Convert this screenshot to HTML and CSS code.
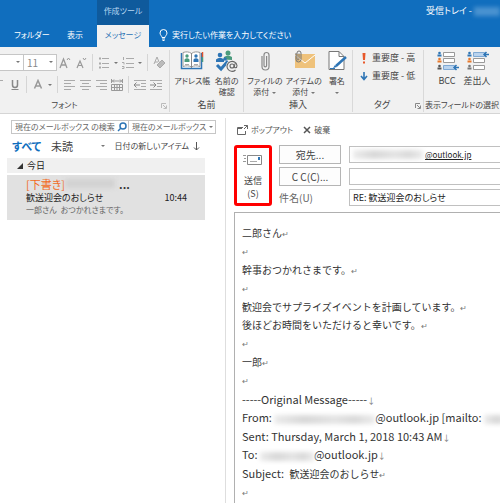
FILE: index.html
```html
<!DOCTYPE html>
<html lang="ja">
<head>
<meta charset="utf-8">
<title>受信トレイ</title>
<link rel="stylesheet" href="styles.css">
</head>
<body>
<header class="titlebar">
  <nav class="tabs">
    <a class="tab tab-folder" href="#">フォルダー</a>
    <a class="tab tab-view" href="#">表示</a>
    <div class="tool-tab">
      <span class="tool-title">作成ツール</span>
      <a class="tab tab-active" href="#">メッセージ</a>
    </div>
    <button class="tell-me" type="button">
      <svg width="9" height="12" viewBox="0 0 9 12" fill="none" stroke="#fff"><path d="M3 8.500C3 7 1 6 1 4a3.500 3.500 0 0 1 7 0c0 2-2 3-2 4.500zM3 10h3M3.500 11.500h2"/></svg>
      実行したい作業を入力してください
    </button>
  </nav>
  <div class="window-title">受信トレイ - <span class="mask mask-title"></span></div>
</header>

<section class="ribbon">
  <div class="group group-font">
    <div class="font-rows">
      <div class="row">
        <label class="pick pick-name"><select aria-label="フォント名"><option></option></select></label>
        <label class="pick pick-size"><select aria-label="サイズ"><option>11</option></select></label>
        <button class="tool" aria-label="拡大"><svg width="14" height="14" viewBox="0 0 14 14" fill="none" stroke="#999"><path d="M2 12 5.500 3 9 12M3 9h5" stroke-width="1.300"/><path d="m9 4 1.500-2L12 4"/></svg></button>
        <button class="tool" aria-label="縮小"><svg width="14" height="14" viewBox="0 0 14 14" fill="none" stroke="#999"><path d="m3 12 3-7 3 7M4 9.500h4" stroke-width="1.200"/><path d="m9 2 1.500 2L12 2"/></svg></button>
        <i class="sep"></i>
        <button class="tool" aria-label="箇条書き"><svg width="12" height="12" viewBox="0 0 12 12" stroke="#aaa"><path d="M1 1.500h2M1 6.500h2M1 10.500h2" stroke-width="2"/><path d="M4 1.500h7M4 6.500h7M4 10.500h7"/></svg></button>
        <button class="drop" aria-label="箇条書きの種類"></button>
        <button class="tool" aria-label="段落番号"><svg width="12" height="12" viewBox="0 0 12 12" fill="none" stroke="#aaa"><path d="M1.500 0v3M0 5.500h2v2M0 9.500h2v2H0M4 1.500h8M4 6.500h8M4 10.500h8"/></svg></button>
        <button class="drop" aria-label="段落番号の種類"></button>
        <i class="sep"></i>
        <button class="tool" aria-label="書式のクリア"><svg width="13" height="13" viewBox="0 0 13 13" fill="none" stroke="#aaa"><path d="m1 8 3-7 2 5M2 6h3"/><path d="m4 9 5-5 3 3-5 5z" fill="#bbb"/></svg></button>
      </div>
      <div class="row">
        <button class="tool tool-cut" aria-label="斜体"><svg width="3" height="10" viewBox="0 0 3 10"><path d="M0 .5h3" stroke="#aaa"/></svg></button>
        <button class="tool" aria-label="下線"><svg width="10" height="12" viewBox="0 0 10 12" fill="none" stroke="#888"><path d="M2.500 1v5a2.500 2.500 0 0 0 5 0V1" stroke-width="1.500"/><path d="M1.500 10.500h7"/></svg></button>
        <i class="sep"></i>
        <button class="tool" aria-label="文字の色"><svg width="10" height="11" viewBox="0 0 10 11" fill="none" stroke="#999" stroke-width="1.500"><path d="m1.500 9.500 3.500-8 3.500 8M2.500 7h5"/></svg></button>
        <button class="drop" aria-label="色の種類"></button>
        <i class="sep"></i>
        <button class="tool" aria-label="左揃え"><svg width="11" height="11" viewBox="0 0 11 11" stroke="#aaa"><path d="M0 1.500h11M0 4.500h7M0 7.500h11M0 10.500h7"/></svg></button>
        <button class="tool" aria-label="中央揃え"><svg width="11" height="11" viewBox="0 0 11 11" stroke="#aaa"><path d="M0 1.500h11M2 4.500h7M0 7.500h11M2 10.500h7"/></svg></button>
        <button class="tool" aria-label="右揃え"><svg width="11" height="11" viewBox="0 0 11 11" stroke="#aaa"><path d="M0 1.500h11M4 4.500h7M0 7.500h11M4 10.500h7"/></svg></button>
        <button class="tool" aria-label="均等割り付け"><svg width="12" height="12" viewBox="0 0 12 12" fill="none" stroke="#999"><path d="M.5 0v4M11.500 0v4M1 2h10M3 .5 1.500 2 3 3.500M9 .5 10.500 2 9 3.500"/><path d="M.5 5.500h11v6H.5zM.5 8.500h11M3.500 5v7M6 5v7M8.500 5v7"/></svg></button>
        <i class="sep"></i>
        <button class="tool" aria-label="インデント解除"><svg width="12" height="12" viewBox="0 0 12 12" fill="none" stroke="#aaa"><path d="M0 1.500h12M7 4.500h5M7 7.500h5M0 10.500h12"/><path d="M0 6h6M2.500 3.500 0 6l2.500 2.500" stroke="#888"/></svg></button>
        <button class="tool" aria-label="インデント"><svg width="12" height="12" viewBox="0 0 12 12" fill="none" stroke="#aaa"><path d="M0 1.500h12M7 4.500h5M7 7.500h5M0 10.500h12"/><path d="M0 6h6M3.500 3.500 6 6 3.500 8.500" stroke="#888"/></svg></button>
      </div>
    </div>
    <footer class="group-name group-name-font small">フォント<svg class="launch" width="6" height="6" viewBox="0 0 6 6" fill="none" stroke="#bbb"><path d="M.5 5V.5H5M2 2l3 3M5.500 2.500v3h-3"/></svg></footer>
  </div>

  <div class="group group-names">
    <div class="bigs">
      <button class="big"><svg width="24" height="22" viewBox="0 0 24 22" fill="none"><path d="M1.500 3v15.500h20V3" fill="#fff" stroke="#2e75b5" stroke-width="1.500"/><path d="M3 2.500c3-1 6-1 8.500 1C14 1.500 17 1.500 20 2.500v14c-3-1-6-1-8.500.5-2.500-1.500-5.500-1.500-8.500-.5z" fill="#fff" stroke="#999"/><path d="M11.500 3v15" stroke="#888"/><circle cx="7" cy="6" r="1.700" fill="#4b9b7d"/><path d="M4.500 12V9.500q2.500-2.500 5 0V12z" fill="#4b9b7d"/><circle cx="16" cy="6" r="1.700" fill="#2e75b5"/><path d="M13.500 12V9.500q2.500-2.500 5 0V12z" fill="#2e75b5"/><path d="M5 14.500h4M14 14.500h4" stroke="#aaa"/><path d="M22.500 2v5" stroke="#e0532d" stroke-width="1.500"/><path d="M22.500 7v5" stroke="#4b9b7d" stroke-width="1.500"/></svg>アドレス帳</button>
      <button class="big"><svg width="24" height="22" viewBox="0 0 24 22" fill="none"><circle cx="5" cy="5" r="2.300" fill="#2e75b5"/><path d="M1 12V9.500q4-3.500 8 0V12z" fill="#2e75b5"/><circle cx="13" cy="3" r="2.500" fill="#4b9b7d"/><path d="M9 9.500V7q4-3 8 0v3z" fill="#4b9b7d"/><circle cx="10" cy="9" r="1.800" fill="#2e75b5"/><path d="m2 15 4 4 7-8" stroke="#2e75b5" stroke-width="3"/><circle cx="17" cy="16" r="6" fill="#f1f1f1"/><path d="M20.500 20a5 5 0 1 1 1.500-4.500c0 3-3 3-2.500.5l.5-2.500" stroke="#666" stroke-width="1.100"/><circle cx="17" cy="16" r="2" stroke="#666" stroke-width="1.100"/></svg>名前の<br>確認</button>
    </div>
    <footer class="group-name">名前</footer>
  </div>

  <div class="group group-insert">
    <div class="bigs">
      <button class="big"><svg width="24" height="22" viewBox="0 0 24 22" fill="none" stroke="#888" stroke-width="1.200"><path d="M9 6v10.500a3.500 3.500 0 0 0 7 0V5a2.500 2.500 0 0 0-5 0v10.500a1.300 1.300 0 0 0 2.600 0V6"/></svg>ファイルの<br><span class="more">添付</span></button>
      <button class="big"><svg width="24" height="22" viewBox="0 0 24 22" fill="none"><path d="M3 4h20v14H3z" fill="#efc27b"/><path d="m3 5 10 8 10-8" stroke="#fff"/><path d="M4 3v6.500a2.500 2.500 0 0 0 5 0V3a2 2 0 0 0-4 0v6a1 1 0 0 0 2 0V3.500" stroke="#777"/></svg>アイテムの<br><span class="more">添付</span></button>
      <button class="big"><svg width="24" height="22" viewBox="0 0 24 22" fill="none"><path d="M4 1.500h10l5 5v13H4z" fill="#fff" stroke="#777"/><path d="M14 1.500v5h5" stroke="#777"/><path d="m11 16 10-9" stroke="#2e75b5" stroke-width="2.500"/><path d="m8 18 2-3 2 2z" fill="#2e75b5"/><path d="M5 18.500h5" stroke="#2e75b5"/></svg>署名<br><span class="more more-alone"></span></button>
    </div>
    <footer class="group-name">挿入</footer>
  </div>

  <div class="group group-tags">
    <div class="flags">
      <button class="flag"><svg width="10" height="12" viewBox="0 0 10 12"><path d="M3.500 1h3L6 8H4zM4 9.500h2v2H4z" fill="#e8592b"/></svg>重要度 - 高</button>
      <button class="flag"><svg width="10" height="12" viewBox="0 0 10 12" fill="none" stroke="#2e75b5" stroke-width="1.600"><path d="M5 2v7M2 6l3 3.500L8 6"/></svg>重要度 - 低</button>
    </div>
    <footer class="group-name group-name-tags">タグ<svg class="launch" width="6" height="6" viewBox="0 0 6 6" fill="none" stroke="#888"><path d="M.5 5V.5H5M2 2l3 3M5.500 2.500v3h-3"/></svg></footer>
  </div>

  <div class="group group-fields">
    <div class="bigs bigs-fields">
      <button class="big big-field"><svg width="24" height="22" viewBox="0 0 24 22" fill="none"><path d="M8.500 2.500h11v4h-11zM8.500 8.500h11v4h-11z" fill="#fff" stroke="#999"/><path d="M8.500 15.500h11v4h-11z" fill="#b9d3ee" stroke="#7fa9d3"/><path d="M24 17.500h-5M21.500 15l-2.500 2.500 2.500 2.500" stroke="#2e75b5" stroke-width="1.500"/><g fill="#2e75b5"><circle cx="4.500" cy="3" r="1.300"/><path d="M2.500 4.500h4v2h-4z"/></g><g fill="#e8792b"><circle cx="4.500" cy="9" r="1.300"/><path d="M2.500 10.500h4v2h-4z"/></g><g fill="#555"><circle cx="4.500" cy="16" r="1.300"/><path d="M2.500 17.500h4v2h-4z"/></g></svg>BCC</button>
      <button class="big big-field"><svg width="24" height="22" viewBox="0 0 24 22" fill="none"><path d="M8.500 8.500h11v4h-11zM8.500 15.500h11v4h-11z" fill="#fff" stroke="#999"/><path d="M8.500 2.500h11v4h-11z" fill="#b9d3ee" stroke="#7fa9d3"/><path d="M24 4.500h-5M21.500 2 19 4.500 21.500 7" stroke="#2e75b5" stroke-width="1.500"/><g fill="#2e75b5"><circle cx="4.500" cy="3" r="1.300"/><path d="M2.500 4.500h4v2h-4z"/></g><g fill="#e8792b"><circle cx="4.500" cy="9" r="1.300"/><path d="M2.500 10.500h4v2h-4z"/></g><g fill="#777"><circle cx="4.500" cy="16" r="1.300"/><path d="M2.500 17.500h4v2h-4z"/></g></svg>差出人</button>
    </div>
    <footer class="group-name small">表示フィールドの選択</footer>
  </div>
</section>

<main class="panes">
  <aside class="list">
    <div class="search">
      <input class="search-box" type="text" aria-label="検索" placeholder="現在のメールボックス の検索">
      <button class="search-go" aria-label="検索する"><svg width="10" height="10" viewBox="0 0 10 10" fill="none" stroke="#2e75b5" stroke-width="1.500"><circle cx="6" cy="4" r="3"/><path d="M4 6 1 9"/></svg></button>
      <label class="pick pick-scope"><select aria-label="検索範囲"><option>現在のメールボックス</option></select></label>
    </div>
    <div class="filters">
      <a class="filter filter-on" href="#">すべて</a>
      <a class="filter" href="#">未読</a>
      <button class="drop filter-more" aria-label="並べ替えの種類"></button>
      <button class="sort">日付の新しいアイテム</button>
      <svg width="7" height="9" viewBox="0 0 7 9" fill="none" stroke="#555"><path d="M3.500 0v8M1 5.500 3.500 8 6 5.500"/></svg>
    </div>
    <h2 class="day"><svg width="6" height="6" viewBox="0 0 6 6"><path d="M6 0v6H0z" fill="#333"/></svg>今日</h2>
    <article class="mail">
      <div class="mail-from">[下書き]<span class="mask mask-from"></span><b>...</b></div>
      <div class="mail-subject"><span>歓送迎会のおしらせ</span><time>10:44</time></div>
      <div class="mail-text">一郎さん&ensp;おつかれさまです。</div>
    </article>
  </aside>

  <section class="compose">
    <div class="actions">
      <button class="action"><svg width="11" height="10" viewBox="0 0 11 10" fill="none" stroke="#666"><path d="M6 2.500H.5v7h8V6M.5 3.500H5" /><path d="M7 .5h3.500V4M10.500.5 7 4"/></svg>ポップアウト</button>
      <button class="action"><svg width="8" height="8" viewBox="0 0 8 8" stroke="#555" stroke-width="1.500"><path d="m1 1 6 6M7 1 1 7"/></svg>破棄</button>
    </div>
    <div class="head">
      <button class="send"><svg width="20" height="12" viewBox="0 0 20 12" fill="none"><path d="M4.500 1.500h14v9h-14z" fill="#fff" stroke="#888"/><path d="M0 1.500h3M1 4.500h2M0 7.500h3" stroke="#999"/><path d="M15 3h2v3h-2z" fill="#2e75b5"/><path d="M7 7.500h7" stroke="#aaa"/></svg><span>送信<br>(S)</span></button>
      <div class="fields">
        <button class="recipient">宛先...</button>
        <div class="to"><input class="field field-to" aria-label="宛先" value="@outlook.jp"><span class="mask mask-to"></span></div>
        <button class="recipient">C C(C)...</button>
        <input class="field" aria-label="CC">
        <label class="subject-label" for="subject">件名(U)</label>
        <input class="field" id="subject" value="RE: 歓送迎会のおしらせ">
      </div>
    </div>
    <div class="editor" contenteditable="true" role="textbox" aria-label="本文" spellcheck="false">
      <p>二郎さん<i>↵</i><br><i>↵</i></p>
      <p>幹事おつかれさまです。<i>↵</i><br><i>↵</i></p>
      <p>歓迎会でサプライズイベントを計画しています。<i>↵</i><br>後ほどお時間をいただけると幸いです。<i>↵</i><br><i>↵</i></p>
      <p>一郎<i>↵</i><br><i>↵</i></p>
      <div class="quote">
        <p>-----Original Message-----<i>↓</i><br>From: <span class="mask mask-sender"></span>@outlook.jp [mailto: <span class="mask mask-mailto"></span></p>
        <p>Sent: Thursday, March 1, 2018 10:43 AM<i>↓</i><br>To: <span class="mask mask-rcpt"></span>@outlook.jp<i>↓</i></p>
        <p>Subject: <span class="quote-ja">歓送迎会のおしらせ</span><i>↵</i><br><i>↵</i></p>
      </div>
    </div>
  </section>
</main>
</body>
</html>
```
FILE: styles.css
```css
* { box-sizing: border-box; }
html, body { height: 100%; }
body {
  margin: 0;
  display: flex;
  flex-direction: column;
  overflow: hidden;
  background: #fff;
  color: #444;
  font: 10px/12px "Noto Sans CJK JP", sans-serif;
  font-feature-settings: "palt";
  white-space: nowrap;
}
button, input, select {
  margin: 0;
  padding: 0;
  border: 0;
  border-radius: 0;
  background: none;
  color: inherit;
  font: inherit;
  font-feature-settings: inherit;
  white-space: nowrap;
}
select { appearance: none; width: 100%; height: 100%; padding-left: 3px; outline: 0; }
a { color: inherit; text-decoration: none; }
svg { flex: none; }

.mask {
  display: inline-block;
  height: 9px;
  background: linear-gradient(90deg, #ececec, #d8d8d8 30%, #e4e4e4 60%, #dadada 80%, #ececec);
  filter: blur(2px);
  vertical-align: middle;
}

/* Title bar */
.titlebar { display: flex; justify-content: space-between; height: 47px; background: #106ebe; color: #fff; flex: none; font-size: 8px; }
.tabs { display: flex; align-items: flex-end; }
.tab { height: 22px; line-height: 20px; }
.tab-folder { margin-left: 14px; width: 53px; }
.tab-view { width: 30px; }
.tool-tab { width: 52px; height: 47px; background: #0f5a9c; text-align: center; color: #b9d8f2; }
.tool-title { display: block; height: 25px; line-height: 22px; }
.tab-active { display: block; background: #f1f1f1; color: #2a72b5; }
.tell-me { display: flex; align-items: center; gap: 4px; height: 22px; margin-left: 10px; padding-bottom: 2px; }
.window-title { padding-top: 5px; font-size: 9px; }
.mask-title { width: 26px; background: #4a92d0; }

/* Ribbon */
.ribbon { display: flex; height: 67px; flex: none; padding: 3px 0 1px; background: #f1f1f1; border-bottom: 1px solid #d5d5d5; font-size: 9px; }
.group { display: flex; flex-direction: column; justify-content: space-between; border-right: 1px solid #d9d9d9; flex: none; }
.group-font { width: 170px; }
.group-names { width: 74px; }
.group-insert { width: 109px; }
.group-tags { width: 71px; }
.group-fields { flex: 1; min-width: 0; border-right: 0; }
.group-name { display: flex; justify-content: center; align-items: center; line-height: 14px; position: relative; }
.group-name-font { padding-right: 40px; }
.group-name-tags { padding-right: 12px; }
.small { font-size: 8px; }
.launch { position: absolute; right: 2px; bottom: 3px; }
.row { display: flex; align-items: center; height: 22px; padding-top: 3px; }
.pick { display: flex; align-items: center; position: relative; background: #fff; border: 1px solid #c6c6c6; height: 17px; }
.pick::after, .drop::after, .more::after {
  content: "";
  border: 2px solid transparent;
  border-top-color: #777;
  border-bottom: 0;
}
.pick::after { position: absolute; right: 3px; top: 6px; }
.pick-name { width: 24px; border-left: 0; }
.pick-size { width: 33px; border-left: 0; color: #888; font-size: 10px; }
.tool { display: flex; align-items: center; justify-content: center; width: 16px; height: 16px; }
.tool-cut { width: 7px; justify-content: flex-start; }
.drop { display: flex; align-items: center; justify-content: center; width: 8px; height: 16px; }
.sep { width: 1px; height: 17px; margin: 0 3px; background: #d5d5d5; }
.bigs { display: flex; justify-content: space-evenly; align-items: flex-start; }
.bigs-fields { justify-content: flex-start; padding-left: 8px; }
.big { line-height: 11px; font-size: 8px; }
.big-field { width: 30px; font-size: 9px; }
.big svg { display: block; margin: 0 auto 3px; }
.more::after { display: inline-block; margin-left: 3px; vertical-align: middle; }
.more-alone::after { margin-left: 0; }
.flags { display: flex; flex-direction: column; padding-left: 6px; gap: 2px; }
.flag { display: flex; align-items: center; gap: 3px; height: 16px; }

/* Message list */
.panes { display: flex; flex: 1; min-height: 0; }
.list { width: 226px; flex: none; margin-top: 4px; padding-left: 7px; border-right: 1px solid #dedede; }
.search { display: flex; margin: 2px 9px 0 4px; height: 14px; border: 1px solid #c6c6c6; font-size: 8px; }
.search-box { flex: 1; min-width: 0; padding-left: 3px; }
.search-box::placeholder { color: #666; opacity: 1; }
.search-go { width: 13px; display: flex; align-items: center; justify-content: center; }
.pick-scope { width: 87px; height: 12px; border-width: 0 0 0 1px; color: #666; }
.pick-scope::after { top: 5px; right: 2px; }
.filters { display: flex; align-items: center; height: 24px; padding-left: 5px; font-size: 11px; }
.filter { margin-right: 10px; }
.filter-on { color: #106ebe; font-weight: 700; }
.filter-more { margin-left: auto; }
.sort { margin: 0 4px 0 8px; font-size: 8px; }
.filters svg { margin-right: 25px; }
.day { display: flex; align-items: center; gap: 4px; height: 15px; margin: 0 20px 2px 0; padding-left: 10px; background: #f0f0f0; font-size: 9px; font-weight: 400; color: #222; }
.mail { margin-right: 20px; padding: 2px 18px 4px 19px; background: #e1e1e1; line-height: 12px; color: #222; font-size: 9px; }
.mail-from { display: flex; align-items: center; height: 15px; padding-bottom: 2px; color: #f26a21; font-size: 11px; }
.mask-from { width: 50px; margin-right: 4px; background: #d2d2d2; }
.mail-from b { color: #333; }
.mail-subject { display: flex; justify-content: space-between; }
.mail-text { color: #666; font-size: 8px; }

/* Compose pane */
.compose { display: flex; flex-direction: column; flex: 1; min-width: 0; padding-left: 8px; }
.actions { display: flex; gap: 10px; height: 31px; align-items: center; padding-left: 3px; font-size: 8px; color: #555; }
.action { display: flex; align-items: center; gap: 3px; }
.head { display: flex; gap: 7px; }
.send { display: flex; flex-direction: column; align-items: center; justify-content: flex-end; gap: 8px; width: 38px; border: 3px solid #f00; border-radius: 3px; padding-bottom: 3px; background: #fff; line-height: 13px; font-size: 9px; }
.fields { display: grid; flex: 1; grid-template-columns: 62px 1fr; column-gap: 8px; row-gap: 3px; align-items: center; min-width: 0; }
.recipient { height: 19px; border: 1px solid #b5b5b5; background: #fdfdfd; }
.field { display: block; width: 100%; height: 17px; padding-left: 3px; border: 1px solid #c0c0c0; border-right: 0; color: #222; font-size: 9px; }
.to { display: grid; align-items: center; position: relative; }
.field-to { padding-left: 75px; text-decoration: underline; font-size: 8px; }
.mask-to { position: absolute; left: 4px; width: 70px; }
.subject-label { color: #666; }
.editor { flex: 1; margin-top: 6px; padding: 11px 0 0 7px; border: 1px solid #b0b0b0; border-width: 1px 0 0 1px; overflow: hidden; font-size: 10px; line-height: 18px; font-feature-settings: normal; outline: 0; color: #333; }
.editor p { margin: 0 0 1px; }
.editor i { font-style: normal; font-size: 8px; line-height: 1px; color: #777; }
.quote { font-size: 11px; }
.quote-ja { margin-left: 3px; font-size: 10px; line-height: 1px; }
.mask-sender { width: 101px; }
.mask-mailto { width: 40px; }
.mask-rcpt { width: 54px; }
```
